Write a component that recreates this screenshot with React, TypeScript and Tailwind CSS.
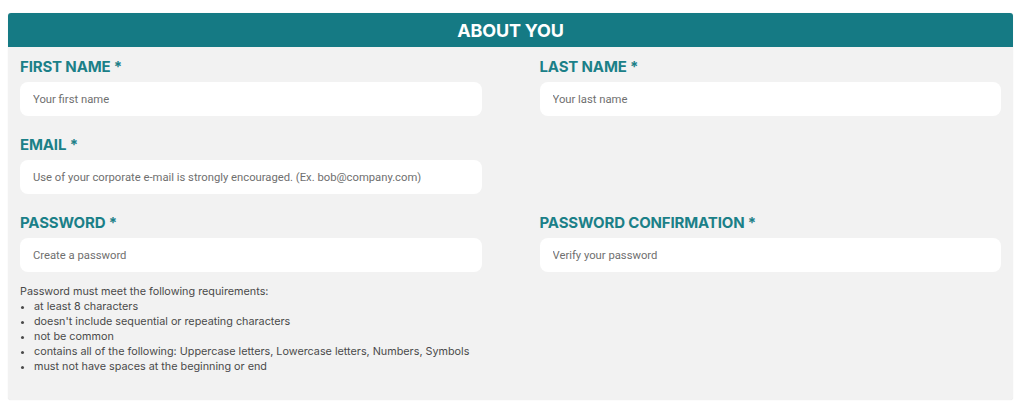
const fields = [
  { label: 'FIRST NAME *', placeholder: 'Your first name' },
  { label: 'LAST NAME *', placeholder: 'Your last name' },
];

const requirements = [
  'at least 8 characters',
  "doesn't include sequential or repeating characters",
  'not be common',
  'contains all of the following: Uppercase letters, Lowercase letters, Numbers, Symbols',
  'must not have spaces at the beginning or end',
];

function Field({ label, placeholder }: { label: string; placeholder: string }) {
  return (
    <div className="flex flex-col">
      <label className="font-['Inter',sans-serif] text-[15px] font-bold leading-[18px] tracking-[-0.15px] text-[#1b8088] h-[21px] -mt-[3px] mb-[3px]">
        {label}
      </label>
      <input
        className="h-[34px] w-full rounded-lg bg-white px-[13px] font-['Roboto',sans-serif] text-[11.25px] text-[#333] placeholder:text-[#6f6f6f] outline-none"
        placeholder={placeholder}
      />
    </div>
  );
}

export default function App() {
  return (
    <div className="min-h-screen bg-white pl-2 pr-[11px] pt-[13px] pb-2">
      <div className="rounded-[3px] bg-[#f2f2f2] overflow-hidden shadow-[0_0_1px_rgba(0,0,0,0.15)]">
        <div className="h-[34px] bg-[#157a84] flex items-center justify-center">
          <h1 className="font-['Inter',sans-serif] text-[18px] font-bold text-white tracking-[-0.2px]">ABOUT YOU</h1>
        </div>

        <div className="px-3 pt-[14px] pb-[26px] grid grid-cols-2 gap-x-[58px] gap-y-[23px]">
          {fields.map((f) => (
            <Field key={f.label} {...f} />
          ))}
          <Field
            label="EMAIL *"
            placeholder="Use of your corporate e-mail is strongly encouraged. (Ex. bob@company.com)"
          />
          <div />
          <div className="flex flex-col">
            <Field label="PASSWORD *" placeholder="Create a password" />
            <div className="mt-[12px] font-['Inter',sans-serif] text-[10.8px] leading-[15px] text-[#4a4a4a]">
              <p>Password must meet the following requirements:</p>
              <ul className="list-disc pl-[14px]">
                {requirements.map((r) => (
                  <li key={r}>{r}</li>
                ))}
              </ul>
            </div>
          </div>
          <Field label="PASSWORD CONFIRMATION *" placeholder="Verify your password" />
        </div>
      </div>
    </div>
  );
}
